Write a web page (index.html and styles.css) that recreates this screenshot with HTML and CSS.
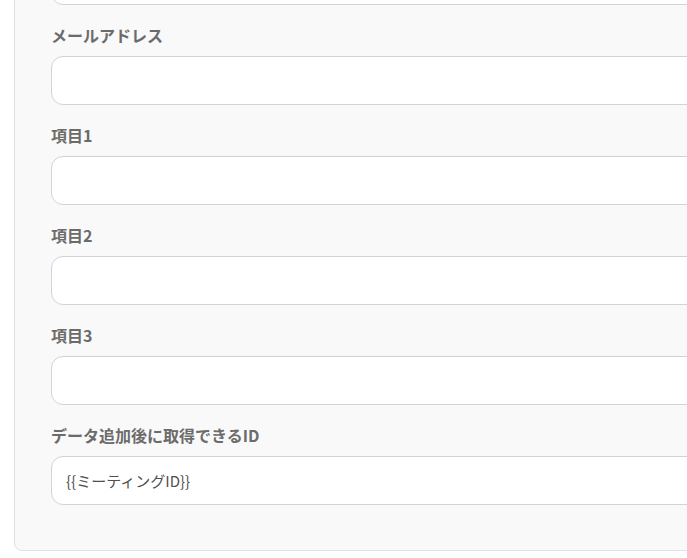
FILE: index.html
```html
<!DOCTYPE html>
<html lang="ja">
<head>
<meta charset="utf-8">
<link rel="stylesheet" href="styles.css">
</head>
<body>
<div class="panel">
  <div class="field">
    <div class="input"></div>
  </div>
  <div class="field">
    <label class="label">メールアドレス</label>
    <div class="input"></div>
  </div>
  <div class="field">
    <label class="label">項目1</label>
    <div class="input"></div>
  </div>
  <div class="field">
    <label class="label">項目2</label>
    <div class="input"></div>
  </div>
  <div class="field">
    <label class="label">項目3</label>
    <div class="input"></div>
  </div>
  <div class="field">
    <label class="label">データ追加後に取得できるID</label>
    <div class="input">{{ミーティングID}}</div>
  </div>
</div>
</body>
</html>
```
FILE: styles.css
```css
html, body {
  margin: 0;
  padding: 0;
  background: #ffffff;
  overflow: hidden;
  height: 558px;
}
body {
  font-family: "Noto Sans CJK JP", "Noto Sans", sans-serif;
}
.panel {
  margin: -65px 0 0 14px;
  width: 760px;
  box-sizing: border-box;
  background: #f9f9f9;
  border: 1px solid #e2e2e2;
  border-radius: 8px;
  padding: 20px 0 45px 36px;
  display: flex;
  flex-direction: column;
  gap: 19px;
}
.field {
  display: flex;
  flex-direction: column;
  gap: 10px;
}
.label {
  font-size: 16px;
  line-height: 22px;
  font-weight: bold;
  color: #6b6b6b;
}
.input {
  height: 49px;
  box-sizing: border-box;
  background: #ffffff;
  border: 1px solid #cfd3dc;
  border-radius: 12px;
  padding: 0 14px;
  display: flex;
  align-items: center;
  font-size: 15px;
  color: #505050;
}
```
